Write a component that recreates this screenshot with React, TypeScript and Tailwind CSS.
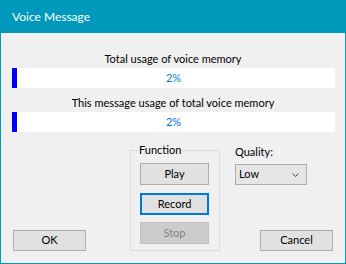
const btn =
  'flex items-center justify-center border border-[#adadad] bg-[#e1e1e1] text-[11px] text-black'

function Meter({ label, value }: { label: string; value: number }) {
  return (
    <div className="flex flex-col">
      <div className="h-[16px] text-center text-[11px] leading-[16px] text-black">{label}</div>
      <div className="relative mt-[1px] ml-[11px] flex h-[20px] w-[323px] items-center justify-center bg-white">
        <div className="absolute left-0 top-0 h-full w-[5px] bg-[#0000ff]" />
        <span className="text-[11px] text-[#0078d7]">{value}%</span>
      </div>
    </div>
  )
}

export default function App() {
  return (
    <div className="flex h-[264px] w-[346px] flex-col font-['Lato',sans-serif]">
      <div className="flex h-[33px] items-center bg-[#0099bc] pl-[12px] text-[12px] text-white">
        Voice Message
      </div>
      <div className="flex flex-1 flex-col border-x border-b border-[#0099bc] bg-[#f0f0f0]">
        <div className="mt-[18px]">
          <Meter label="Total usage of voice memory" value={2} />
        </div>
        <div className="mt-[7px]">
          <Meter label="This message usage of total voice memory" value={2} />
        </div>
        <div className="mt-[11px] flex h-[108px]">
          <div className="flex w-[129px] flex-col justify-end pl-[12px]">
            <button className={`${btn} h-[21px] w-[73px]`}>OK</button>
          </div>
          <fieldset className="h-[108px] w-[90px] border border-[#dcdcdc] px-[9px]">
            <legend className="ml-[-2px] px-[1px] text-[11px] leading-[14px] text-black">Function</legend>
            <div className="mt-[6px] flex flex-col">
              <button className={`${btn} h-[22px] w-[69px]`}>Play</button>
              <button className="mt-[8px] flex h-[22px] w-[69px] items-center justify-center border-2 border-[#0078d7] bg-[#e1e1e1] text-[11px] text-black">
                Record
              </button>
              <button className="mt-[7px] flex h-[22px] w-[69px] items-center justify-center border border-[#bfbfbf] bg-[#cccccc] text-[11px] text-[#838383]">
                Stop
              </button>
            </div>
          </fieldset>
          <div className="ml-[15px] flex flex-1 flex-col">
            <div className="mt-[1px] h-[16px] text-[11px] leading-[16px] text-black">Quality:</div>
            <div className="mt-[4px] flex h-[21px] w-[72px] items-center justify-between border border-[#adadad] bg-[#e5e5e5] pl-[3px] pr-[7px] text-[11px] text-black">
              <span>Low</span>
              <svg width="7" height="4" viewBox="0 0 7 4" fill="none" stroke="#444" strokeWidth="1">
                <path d="M0.5 0.5 L3.5 3.5 L6.5 0.5" />
              </svg>
            </div>
            <button className={`${btn} mt-auto ml-[25px] h-[21px] w-[73px]`}>Cancel</button>
          </div>
        </div>
      </div>
    </div>
  )
}
